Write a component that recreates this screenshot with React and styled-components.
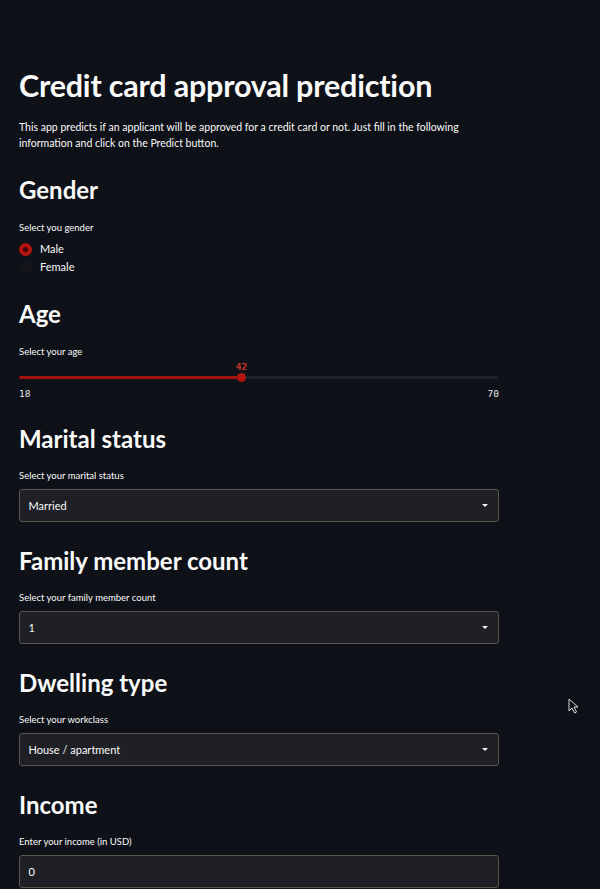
import React from "react";
import styled, { createGlobalStyle } from "styled-components";

const Global = createGlobalStyle`
  html, body { margin: 0; padding: 0; background: #0e1117; }
  body { font-family: "Lato", "Noto Sans", sans-serif; color: #fafafa; }
`;

const Page = styled.div`
  height: 889px;
  background: #0e1117;
  position: relative;
  overflow: hidden;
`;

const Main = styled.main`
  width: 480px;
  padding: 62px 0 0 19px;
  display: flex;
  flex-direction: column;
`;

const Title = styled.h1`
  margin: 0;
  font-size: 30.5px;
  font-weight: 700;
  line-height: 46px;
  color: #fafafa;
  letter-spacing: -0.2px;
`;

const Intro = styled.p`
  margin: 11px 0 0;
  font-size: 10.5px;
  line-height: 16px;
  color: #fafafa;
`;

const Heading = styled.h2`
  margin: ${(p) => p.$top}px 0 0;
  font-size: 24px;
  font-weight: 700;
  line-height: 34px;
  color: #fafafa;
`;

const Label = styled.div`
  margin-top: ${(p) => p.$top ?? 14}px;
  font-size: 9.5px;
  line-height: 12px;
  color: #fafafa;
`;

const RadioGroup = styled.div`
  margin-top: 8px;
  display: flex;
  flex-direction: column;
  gap: 4px;
`;

const RadioRow = styled.label`
  display: flex;
  align-items: center;
  gap: 8px;
  font-size: 11px;
  line-height: 14px;
  height: 14px;
`;

const RadioDot = styled.span`
  width: 13px;
  height: 13px;
  border-radius: 50%;
  box-sizing: border-box;
  background: ${(p) => (p.$checked ? "#3a0a08" : "#14161c")};
  border: ${(p) => (p.$checked ? "4.5px solid #b3140e" : "none")};
`;

const SliderWrap = styled.div`
  margin-top: 3px;
  position: relative;
  height: 26px;
`;

const Track = styled.div`
  position: absolute;
  left: 0;
  right: 0;
  top: 15px;
  height: 3px;
  border-radius: 2px;
  background: #1e2027;
`;

const Fill = styled.div`
  position: absolute;
  left: 0;
  top: 15px;
  height: 3px;
  border-radius: 2px;
  background: #a3120d;
`;

const Thumb = styled.div`
  position: absolute;
  top: 12px;
  width: 9px;
  height: 9px;
  margin-left: -4.5px;
  border-radius: 50%;
  background: #b3140e;
`;

const ThumbValue = styled.div`
  position: absolute;
  top: 0;
  transform: translateX(-50%);
  font-family: "DejaVu Sans Mono", monospace;
  font-size: 9.5px;
  line-height: 12px;
  font-weight: 700;
  color: #c8332c;
`;

const RangeLabels = styled.div`
  display: flex;
  justify-content: space-between;
  margin-top: 1px;
  font-family: "DejaVu Sans Mono", monospace;
  font-size: 9.5px;
  line-height: 12px;
  color: #e6e6e6;
`;

const Field = styled.div`
  margin-top: 7px;
  height: 33px;
  box-sizing: border-box;
  border: 1.5px solid #5b574c;
  border-radius: 3px;
  background: #1f2025;
  display: flex;
  align-items: center;
  justify-content: space-between;
  padding: 0 10px 0 8.5px;
  font-size: 11px;
  color: #fafafa;
`;

const Caret = styled.span`
  width: 0;
  height: 0;
  border-left: 3px solid transparent;
  border-right: 3px solid transparent;
  border-top: 3px solid #f0f0f0;
`;

const Cursor = styled.svg`
  position: absolute;
  left: 568px;
  top: 698px;
`;

function Select({ value }) {
  return (
    <Field>
      <span>{value}</span>
      <Caret />
    </Field>
  );
}

export default function App() {
  const pct = (42 - 18) / (70 - 18);
  const thumbX = pct * 480 + 1;
  return (
    <Page>
      <Global />
      <Main>
        <Title>Credit card approval prediction</Title>
        <Intro>
          This app predicts if an applicant will be approved for a credit card or not. Just fill in the following
          information and click on the Predict button.
        </Intro>

        <Heading $top={22}>Gender</Heading>
        <Label $top={15}>Select you gender</Label>
        <RadioGroup>
          <RadioRow>
            <RadioDot $checked />
            Male
          </RadioRow>
          <RadioRow>
            <RadioDot />
            Female
          </RadioRow>
        </RadioGroup>

        <Heading $top={23}>Age</Heading>
        <Label $top={15}>Select your age</Label>
        <SliderWrap>
          <Track />
          <Fill style={{ width: thumbX }} />
          <Thumb style={{ left: thumbX }} />
          <ThumbValue style={{ left: thumbX }}>42</ThumbValue>
        </SliderWrap>
        <RangeLabels>
          <span>18</span>
          <span>70</span>
        </RangeLabels>

        <Heading $top={22}>Marital status</Heading>
        <Label>Select your marital status</Label>
        <Select value="Married" />

        <Heading $top={22}>Family member count</Heading>
        <Label>Select your family member count</Label>
        <Select value="1" />

        <Heading $top={22}>Dwelling type</Heading>
        <Label>Select your workclass</Label>
        <Select value="House / apartment" />

        <Heading $top={22}>Income</Heading>
        <Label>Enter your income (in USD)</Label>
        <Field>
          <span>0</span>
        </Field>
      </Main>
      <Cursor width="12" height="16" viewBox="0 0 12 16">
        <path d="M1 1 L1 13 L4 10 L6.5 15 L8.5 14 L6 9 L10 9 Z" fill="#0e1117" stroke="#d8d8d8" strokeWidth="1" />
      </Cursor>
    </Page>
  );
}
